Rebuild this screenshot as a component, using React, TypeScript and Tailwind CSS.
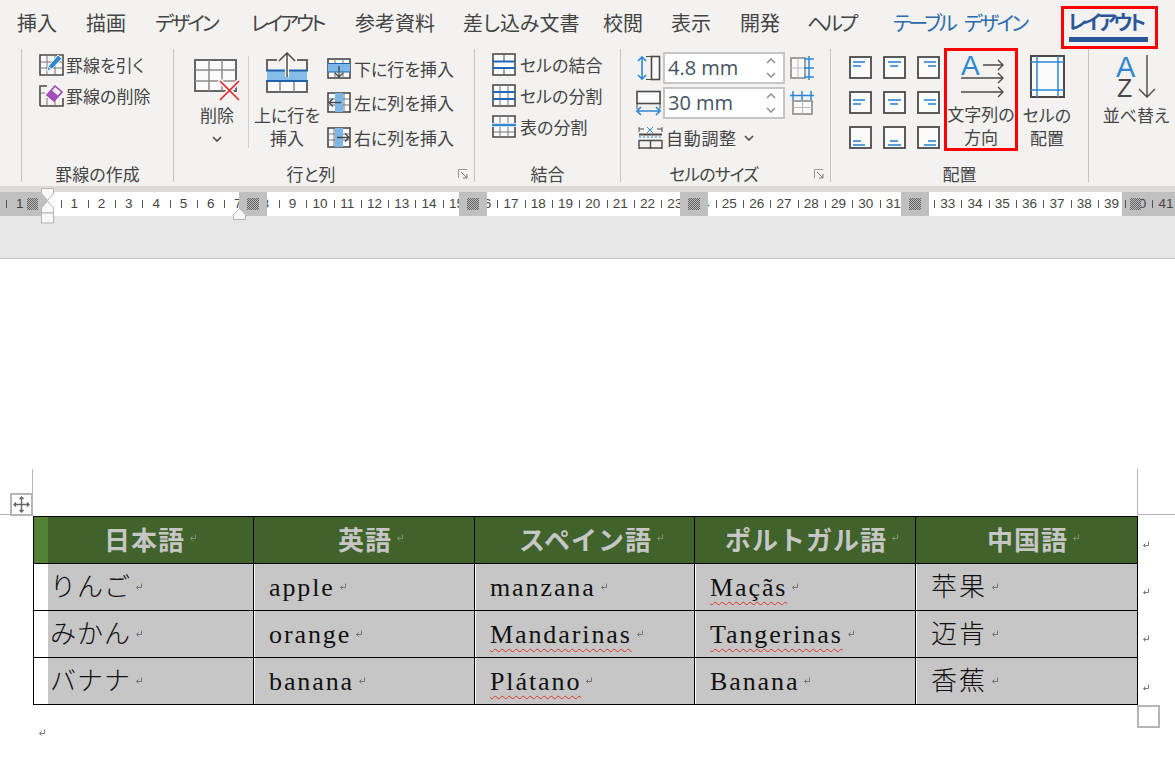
import type { ReactNode } from "react";

const TABS = [
  { label: "挿入", w: 69, cls: "" },
  { label: "描画", w: 69, cls: "" },
  { label: "デザイン", w: 96, cls: "tracking-[-2.9px]" },
  { label: "レイアウト", w: 104, cls: "tracking-[-3px]" },
  { label: "参考資料", w: 108, cls: "" },
  { label: "差し込み文書", w: 140, cls: "" },
  { label: "校閲", w: 68, cls: "" },
  { label: "表示", w: 69, cls: "" },
  { label: "開発", w: 68, cls: "" },
  { label: "ヘルプ", w: 86, cls: "-ml-[1px] tracking-[-3px]" },
];

const RULER = [1, null, ...Array.from({ length: 41 }, (_, i) => i + 1)];
const RULER_GAPS = [239, 459, 680, 901];

const HEAD = ["日本語", "英語", "スペイン語", "ポルトガル語", "中国語"];
const ROWS = [
  ["りんご", "apple", "manzana", "Maçãs", "苹果"],
  ["みかん", "orange", "Mandarinas", "Tangerinas", "迈肯"],
  ["バナナ", "banana", "Plátano", "Banana", "香蕉"],
];
const MISSPELT = ["Maçãs", "Mandarinas", "Tangerinas", "Plátano"];

const BLUE = "#2f86d1";
const DARK = "#4a4a4a";
const GRID = "#777";

function Mark({ color = "#777" }: { color?: string }) {
  return (
    <svg width="8" height="8" viewBox="0 0 8 8" className="shrink-0" fill="none" stroke={color}>
      <path d="M6.5 0.5v4H1.5M3.5 2.5l-2 2 2 2" />
    </svg>
  );
}

function DrawIcon() {
  return (
    <svg width="25" height="23" viewBox="0 0 25 23" fill="none">
      <path d="M1 2h23v20H1z" fill="#f8f8f8" stroke={DARK} strokeWidth="1.6" />
      <path d="M8 2v20M16 2v20M1 9h23M1 15h23" stroke={GRID} />
      <path d="M8 18l1.5-5L19 2l4 3.5L13 16z" fill={BLUE} stroke="#f3f2f1" />
      <path d="M10 14l3 2.5" stroke="#fff" />
    </svg>
  );
}

function EraseIcon() {
  return (
    <svg width="25" height="23" viewBox="0 0 25 23" fill="none">
      <path d="M1 22V2h7M24 14v8H1" stroke={DARK} strokeWidth="1.6" />
      <path d="M8 22v-8M16 22v-6M1 9h5" stroke={GRID} />
      <path d="M8 11l8-9 7 6-8 9z" fill="#f3f2f1" stroke="#9a3fae" strokeWidth="1.6" />
      <path d="M8 11l4.5-5 7 6-4.5 5z" fill="#a64fbb" />
    </svg>
  );
}

function DeleteIcon() {
  return (
    <svg width="46" height="42" viewBox="0 0 46 42" fill="none" className="mt-[10px]">
      <path d="M1 1h41v31H1z" fill="#fafafa" stroke="#666" strokeWidth="2" />
      <path d="M15 1v31M28 1v31M1 11h41M1 22h41" stroke="#8a8a8a" strokeWidth="1.5" />
      <path d="M25 21l21 21M46 21L25 42" stroke="#f3f2f1" strokeWidth="5" />
      <path d="M26 22l19 19M45 22L26 41" stroke="#e02020" strokeWidth="1.6" />
    </svg>
  );
}

function InsertAboveIcon() {
  return (
    <svg width="42" height="41" viewBox="0 0 42 41" fill="none" className="mt-[3px]">
      <path d="M1 18V8h10M31 8h10v10" stroke="#666" strokeWidth="2" />
      <path d="M1 29v11h40V29" fill="#fafafa" stroke="#666" strokeWidth="2" />
      <path d="M14 29v11M28 29v11" stroke="#888" strokeWidth="1.5" />
      <rect x="1" y="18" width="40" height="11" fill="#86bce8" />
      <path d="M0 18.5h42M0 29h42" stroke="#1f62ad" strokeWidth="2" />
      <path d="M21 2v23" stroke="#fff" strokeWidth="4" />
      <path d="M21 1v24M13 9l8-8 8 8" stroke={DARK} strokeWidth="1.5" />
    </svg>
  );
}

function InsertSmallIcon({ dir }: { dir: "down" | "left" | "right" }) {
  return (
    <svg width="24" height="21" viewBox="0 0 24 21" fill="none">
      <rect x="1" y="1" width="22" height="19" fill="#fafafa" stroke={DARK} strokeWidth="1.6" />
      {dir === "down" && (
        <>
          <path d="M8 1v19M16 1v19" stroke={GRID} />
          <rect x="1" y="6" width="22" height="8" fill="#7db7e8" />
          <path d="M1 5.5h22M1 14h22" stroke="#1f62ad" />
          <path d="M12 8v11M8 15l4 4 4-4" stroke={DARK} strokeWidth="1.3" />
        </>
      )}
      {dir === "left" && (
        <>
          <path d="M17 1v19M1 7h22M1 13h22" stroke={GRID} />
          <rect x="8" y="1" width="8" height="19" fill="#7db7e8" />
          <path d="M14 10.5H2M6 6.5l-4 4 4 4" stroke={DARK} strokeWidth="1.3" />
        </>
      )}
      {dir === "right" && (
        <>
          <path d="M7 1v19M1 7h22M1 13h22" stroke={GRID} />
          <rect x="8" y="1" width="8" height="19" fill="#7db7e8" />
          <path d="M10 10.5h12M18 6.5l4 4-4 4" stroke={DARK} strokeWidth="1.3" />
        </>
      )}
    </svg>
  );
}

function MergeIcon({ kind }: { kind: "merge" | "split" | "table" }) {
  return (
    <svg width="24" height="23" viewBox="0 0 24 23" fill="none">
      {kind !== "table" && <rect x="1" y="1" width="22" height="21" fill="#fafafa" stroke={DARK} strokeWidth="1.6" />}
      {kind === "merge" && (
        <>
          <path d="M12 1v7M12 15v7" stroke={DARK} />
          <path d="M1 8.5h22M1 15h22" stroke="#1f6ab8" strokeWidth="2" />
        </>
      )}
      {kind === "split" && (
        <>
          <path d="M8 1v21M16 1v21M1 15h22" stroke={GRID} />
          <path d="M1 8h22M1 15h22" stroke="#1f6ab8" strokeWidth="2" />
        </>
      )}
      {kind === "table" && (
        <>
          <path d="M1 8V1h22v7M1 12v10h22V12" fill="#fafafa" stroke={DARK} strokeWidth="1.6" />
          <path d="M8 1v7M16 1v7M8 12v10M16 12v10M1 17h22" stroke={GRID} />
          <path d="M0 10h24" stroke={BLUE} strokeWidth="2.4" />
        </>
      )}
    </svg>
  );
}

function RowHeightIcon() {
  return (
    <svg width="25" height="26" viewBox="0 0 25 26" fill="none">
      <path d="M6 2v22M2 6l4-4 4 4M2 20l4 4 4-4" stroke={BLUE} strokeWidth="1.6" />
      <rect x="15.5" y="1.5" width="8" height="23" fill="#fafafa" stroke={DARK} strokeWidth="1.6" />
      <path d="M10 1.5h5M10 24.5h5" stroke={DARK} />
    </svg>
  );
}

function ColWidthIcon() {
  return (
    <svg width="25" height="26" viewBox="0 0 25 26" fill="none">
      <rect x="1" y="1.5" width="23" height="12" fill="#fafafa" stroke={DARK} strokeWidth="1.6" />
      <path d="M1 13v6M24 13v6" stroke={DARK} />
      <path d="M1 21h23M5 17l-4 4 4 4M20 17l4 4-4 4" stroke={BLUE} strokeWidth="1.6" />
    </svg>
  );
}

function DistributeIcon({ cols }: { cols?: boolean }) {
  return (
    <svg width="24" height="24" viewBox="0 0 24 24" fill="none">
      {cols ? (
        <>
          <rect x="3" y="10" width="19" height="13" fill="#fafafa" stroke="#8a8a8a" strokeWidth="1.6" />
          <path d="M12.5 10v13M3 16.5h19" stroke="#bbb" />
          <path d="M0 4.5h24M3 0v9M12 0v9M21 0v9" stroke={BLUE} strokeWidth="1.5" />
        </>
      ) : (
        <>
          <rect x="1" y="2" width="14" height="20" fill="#fafafa" stroke="#8a8a8a" strokeWidth="1.6" />
          <path d="M1 12h14M8 2v20" stroke="#bbb" />
          <path d="M19 0v24M14 3h10M14 12h10M14 21h10" stroke={BLUE} strokeWidth="1.5" />
        </>
      )}
    </svg>
  );
}

function AutoFitIcon() {
  return (
    <svg width="25" height="23" viewBox="0 0 25 23" fill="none">
      <path d="M1 6V1M24 6V1M1 3h5M19 3h5" stroke={DARK} />
      <path d="M9 1l3 3 3-3M9 7l3-3 3 3" stroke={BLUE} />
      <path d="M1 8.5h23" stroke={DARK} strokeWidth="2" />
      <path d="M1 11h23" stroke={BLUE} strokeDasharray="2 2" />
      <path d="M1 14.5h23M1 22h23M1 14v9M24 14v9M12.5 14v9" stroke={DARK} strokeWidth="1.4" />
    </svg>
  );
}

function AlignIcon({ row, col }: { row: number; col: number }) {
  const longY = [6, 9, 15][row];
  const shortY = [10, 13, 19][row];
  const long = [[4, 16], [5, 18], [7, 19]][col];
  const short = [[4, 12], [7, 15], [11, 19]][col];
  const first = row === 2 ? short : long;
  const second = row === 2 ? long : short;
  return (
    <svg width="23" height="23" viewBox="0 0 23 23" fill="none">
      <rect x="1" y="1" width="21" height="21" fill="#fafafa" stroke={DARK} strokeWidth="1.8" />
      <path d={`M${first[0]} ${longY}H${first[1]}`} stroke={BLUE} strokeWidth="1.6" />
      <path d={`M${second[0]} ${shortY}H${second[1]}`} stroke={BLUE} strokeWidth="1.6" />
    </svg>
  );
}

function TextDirIcon() {
  return (
    <svg width="44" height="45" viewBox="0 0 44 45" fill="none" className="mt-[2px] overflow-visible">
      <text x="2" y="22" fontSize="28" fontFamily="Liberation Sans" fill={BLUE}>
        A
      </text>
      <path d="M24 12h20M2 25h42M2 39h42" stroke={DARK} strokeWidth="1.4" />
      <path d="M39 7l5 5-5 5M39 20l5 5-5 5M39 34l5 5-5 5" stroke={DARK} strokeWidth="1.4" />
    </svg>
  );
}

function CellMarginIcon() {
  return (
    <svg width="35" height="43" viewBox="0 0 35 43" fill="none" className="mt-[6px]">
      <rect x="1" y="1" width="33" height="41" fill="#fafafa" stroke={DARK} strokeWidth="2" />
      <path d="M7 1v41M28 1v41M1 7h33M1 35h33" stroke={BLUE} strokeWidth="1.5" />
    </svg>
  );
}

function SortIcon() {
  return (
    <svg width="40" height="44" viewBox="0 0 40 44" fill="none" className="mt-[6px] overflow-visible">
      <text x="0" y="22" fontSize="29" fontFamily="Liberation Sans" fill={BLUE}>
        A
      </text>
      <text x="1" y="42" fontSize="25" fontFamily="Liberation Sans" fill={DARK}>
        Z
      </text>
      <path d="M31 0v42M23 34l8 8 8-8" stroke={DARK} strokeWidth="1.4" />
    </svg>
  );
}

function Chevron({ className = "" }: { className?: string }) {
  return (
    <svg width="10" height="6" viewBox="0 0 10 6" fill="none" stroke={DARK} strokeWidth="1.6" className={className}>
      <path d="M1 1l4 4 4-4" />
    </svg>
  );
}

function SmallBtn({ icon, label, gap = "gap-[3px]", h }: { icon: ReactNode; label: string; gap?: string; h: string }) {
  return (
    <div className={`flex items-center ${gap} ${h}`}>
      {icon}
      <span className="whitespace-nowrap text-[17px] leading-none">{label}</span>
    </div>
  );
}

function BigBtn({ icon, lines, iconH = "h-[52px]", className = "" }: { icon: ReactNode; lines: ReactNode[]; iconH?: string; className?: string }) {
  return (
    <div className={`flex shrink-0 flex-col items-center ${className}`}>
      <div className={`flex items-start justify-center ${iconH}`}>{icon}</div>
      <div className="mt-[2px] flex flex-col items-center text-[17px] leading-[23px] whitespace-nowrap">
        {lines.map((l, i) => (
          <span key={i} className="flex h-[23px] items-center">
            {l}
          </span>
        ))}
      </div>
    </div>
  );
}

function Group({ w, label, labelCls = "", launcher, children }: { w: string; label?: string; labelCls?: string; launcher?: boolean; children?: ReactNode }) {
  return (
    <div className={`relative flex h-full shrink-0 flex-col border-r border-[#c8c6c4] ${w}`}>
      <div className="flex min-h-0 flex-1">{children}</div>
      <div className={`h-[20px] text-center text-[17px] leading-[23px] ${labelCls}`}>{label}</div>
      {launcher && (
        <svg width="10" height="10" viewBox="0 0 10 10" fill="none" className="absolute right-[6px] bottom-[3px]">
          <path d="M0.5 9V0.5H9" stroke="#999" />
          <path d="M3 3l5.5 5.5M5 9h4V5" stroke="#777" />
        </svg>
      )}
    </div>
  );
}

function Spinner({ value }: { value: string }) {
  return (
    <div className="flex h-[32px] w-[122px] items-center justify-between border-2 border-[#c6c6c6] bg-white pr-[7px] pl-[3px]">
      <span className="text-[20px] leading-none text-[#44525f] [font-family:'Open_Sans',sans-serif]">{value}</span>
      <div className="flex flex-col gap-[8px]">
        <Chevron className="rotate-180 opacity-60" />
        <Chevron className="opacity-60" />
      </div>
    </div>
  );
}

function Ruler() {
  return (
    <div className="relative h-[24px] overflow-hidden bg-white text-[13.5px] text-[#444] [font-family:'Liberation_Sans',sans-serif]">
      <div className="absolute top-0 left-0 h-full w-[47px] bg-[#c0c0c0]" />
      <div className="absolute top-0 left-[1122px] h-full w-[53px] bg-[#c0c0c0]" />
      <div className="relative flex h-full pl-[6px]">
        {RULER.map((n, i) => (
          <div key={i} className="relative flex h-full w-[27.3px] shrink-0 items-center justify-center">
            {n !== null && <span className="absolute top-[8px] left-0 h-[8px] w-px bg-[#555]" />}
            {n}
          </div>
        ))}
      </div>
      {RULER_GAPS.map((x) => (
        <div key={x} className="absolute top-0 flex h-full w-[28px] items-center justify-center bg-[#c0c0c0]" style={{ left: x }}>
          <div className="h-[12px] w-[12px] bg-[repeating-conic-gradient(#666_0_25%,#b8b8b8_0_50%)] bg-[length:2px_2px]" />
        </div>
      ))}
      <div className="absolute top-[6px] left-[27px] h-[12px] w-[11px] bg-[repeating-conic-gradient(#666_0_25%,#b8b8b8_0_50%)] bg-[length:2px_2px]" />
      <div className="absolute top-[6px] left-[1130px] h-[12px] w-[11px] bg-[repeating-conic-gradient(#666_0_25%,#b8b8b8_0_50%)] bg-[length:2px_2px]" />
    </div>
  );
}

function Cell({ text, first }: { text: string; first: boolean }) {
  const wavy = MISSPELT.includes(text);
  return (
    <div className={`h-[47px] border-r border-b border-black bg-white ${first ? "pl-[14px]" : "pl-px"}`}>
      <div className={`flex h-full items-center gap-[4px] bg-[#c6c6c6] text-[26px] font-light text-[#111] [font-family:'Liberation_Serif','Noto_Sans_CJK_JP',serif] [font-feature-settings:normal] ${first ? "pl-[2px] tracking-[1px]" : "pl-[14px] tracking-[1.9px]"}`}>
        <span className={wavy ? "underline decoration-[#d9352c] decoration-wavy decoration-1 underline-offset-[5px] [text-decoration-skip-ink:none]" : ""}>{text}</span>
        <Mark />
      </div>
    </div>
  );
}

export default function App() {
  return (
    <div className="relative h-[774px] w-[1175px] overflow-hidden bg-white text-[#444] [font-family:'Noto_Sans_CJK_JP',sans-serif] [font-feature-settings:'palt']">
      {/* ribbon */}
      <div className="h-[186px] bg-[#f3f2f1]">
        <div className="relative z-10 flex h-[46px] pl-[17px] text-[20px] leading-[46px]">
          {TABS.map((t) => (
            <div key={t.label} className={`shrink-0 whitespace-nowrap ${t.cls}`} style={{ width: t.w }}>
              {t.label}
            </div>
          ))}
          <div className="w-[168px] shrink-0 tracking-[-2.7px] whitespace-pre text-[#2b6aa8] [word-spacing:7px]">テーブル デザイン</div>
          <div className="mt-[6px] box-border flex h-[43px] w-[97px] shrink-0 flex-col border-[3px] border-[#f00] pl-[4px] font-bold text-[#2b579a]">
            <span className="h-[26px] text-[20px] leading-[25px] tracking-[-3.2px] whitespace-nowrap">レイアウト</span>
            <span className="mt-[2px] ml-[1px] h-[5px] w-[79px] bg-[#2b579a]" />
          </div>
        </div>
        <div className="mt-[3px] flex h-[133px]">
          <Group w="w-[22px]" />
          <Group w="w-[152px]" label="罫線の作成">
            <div className="pl-[17px]">
              <SmallBtn h="h-[31px]" icon={<DrawIcon />} label="罫線を引く" gap="gap-[2px]" />
              <SmallBtn h="h-[31px]" icon={<EraseIcon />} label="罫線の削除" gap="gap-[2px]" />
            </div>
          </Group>
          <Group w="w-[301px]" label="行と列" labelCls="pr-[26px]" launcher>
            <div className="mt-[7px] mb-[1px] h-[92px] w-[75px] shrink-0 border-r border-[#d2d0ce] pl-[12px]">
              <BigBtn className="-mt-[7px]" icon={<DeleteIcon />} lines={["削除", <Chevron key="c" className="mt-[2px]" />]} />
            </div>
            <BigBtn className="w-[76px]" icon={<InsertAboveIcon />} lines={["上に行を", "挿入"]} />
            <div className="pt-[2px] pl-[2px]">
              <SmallBtn h="h-[34.5px]" icon={<InsertSmallIcon dir="down" />} label="下に行を挿入" gap="gap-[3px]" />
              <SmallBtn h="h-[34.5px]" icon={<InsertSmallIcon dir="left" />} label="左に列を挿入" gap="gap-[3px]" />
              <SmallBtn h="h-[34.5px]" icon={<InsertSmallIcon dir="right" />} label="右に列を挿入" gap="gap-[3px]" />
            </div>
          </Group>
          <Group w="w-[146px]" label="結合">
            <div className="pl-[17px]">
              <SmallBtn h="h-[31px]" icon={<MergeIcon kind="merge" />} label="セルの結合" gap="gap-[4px]" />
              <SmallBtn h="h-[31px]" icon={<MergeIcon kind="split" />} label="セルの分割" gap="gap-[4px]" />
              <SmallBtn h="h-[31px]" icon={<MergeIcon kind="table" />} label="表の分割" gap="gap-[4px]" />
            </div>
          </Group>
          <Group w="w-[210px]" label="セルのサイズ" labelCls="pr-[24px] tracking-[-1px]" launcher>
            <div className="flex flex-col gap-[3px] pt-[3px] pl-[15px]">
              <div className="flex items-center gap-[2px]">
                <RowHeightIcon />
                <Spinner value="4.8 mm" />
                <div className="ml-[3px]">
                  <DistributeIcon />
                </div>
              </div>
              <div className="flex items-center gap-[2px]">
                <ColWidthIcon />
                <Spinner value="30 mm" />
                <div className="ml-[3px]">
                  <DistributeIcon cols />
                </div>
              </div>
              <div className="mt-[4px] flex items-center pl-[2px]">
                <AutoFitIcon />
                <span className="ml-[3px] text-[17px] leading-none tracking-[0.7px]">自動調整</span>
                <Chevron className="ml-[7px]" />
              </div>
            </div>
          </Group>
          <Group w="w-[258px]" label="配置">
            <div className="grid h-[92px] shrink-0 grid-cols-[23px_23px_23px] gap-x-[11px] gap-y-[12px] pt-[7px] pl-[18px]">
              {[0, 1, 2].map((row) =>
                [0, 1, 2].map((col) => <AlignIcon key={`${row}${col}`} row={row} col={col} />),
              )}
            </div>
            <BigBtn
              className="-mt-[1px] ml-[4px] box-border h-[103px] w-[74px] border-[3px] border-[#f00]"
              iconH="h-[51px]"
              icon={<TextDirIcon />}
              lines={["文字列の", "方向"]}
            />
            <BigBtn className="w-[58px]" icon={<CellMarginIcon />} lines={["セルの", "配置"]} />
          </Group>
          <div className="ml-[4px] w-[86px] shrink-0">
            <BigBtn icon={<SortIcon />} lines={["並べ替え"]} />
          </div>
        </div>
      </div>

      {/* rulers */}
      <div className="h-[6px] bg-[#dcdbda]" />
      <div className="relative">
        <Ruler />
        <svg width="14" height="36" viewBox="0 0 14 36" fill="#f8f8f8" stroke="#b5b5b5" className="absolute -top-[4px] left-[41px]">
          <path d="M0.5 0.5h12v5l-6 7-6-7z" />
          <path d="M6.5 13l6 7v5h-12v-5z" />
          <path d="M0.5 25h12v10h-12z" />
        </svg>
        <svg width="14" height="12" viewBox="0 0 14 12" fill="#f8f8f8" stroke="#b5b5b5" className="absolute top-[16px] left-[233px]">
          <path d="M6.5 0.5l6 6v5h-12v-5z" />
        </svg>
      </div>
      <div className="h-[43px] border-b border-[#c6c6c6] bg-[#e6e6e6]" />

      {/* document */}
      <div className="pt-[257px] pl-[33px]">
        <div className="relative w-[1105px]">
          <span className="absolute -top-[47px] -left-px h-[46px] w-px bg-[#b5b5b5]" />
          <span className="absolute -top-[2px] -left-[33px] h-px w-[33px] bg-[#b5b5b5]" />
          <div className="absolute -top-[23px] -left-[23px] flex h-[23px] w-[23px] items-center justify-center border-2 border-[#b5b5b5] bg-white">
            <svg width="17" height="17" viewBox="0 0 17 17" fill="none" stroke="#666" strokeWidth="1.4">
              <path d="M8.5 1v15M1 8.5h15M6.5 3l2-2 2 2M6.5 14l2 2 2-2M3 6.5l-2 2 2 2M14 6.5l2 2-2 2" />
            </svg>
          </div>
          <span className="absolute -top-[47px] right-0 h-[45px] w-px bg-[#b5b5b5]" />
          <span className="absolute -top-[2px] left-[1104px] h-px w-[40px] bg-[#b5b5b5]" />

          <div className="grid grid-cols-[220px_221px_220px_221px_222px] border-t border-l border-black">
            {HEAD.map((h, i) => (
              <div key={h} className="relative flex h-[47px] items-center justify-center border-r border-b border-black bg-[#40622b] pb-[3px] pl-[2px] text-[26px] font-bold tracking-[1px] text-[#c6c6c6] [font-feature-settings:normal]">
                {i === 0 && <span className="absolute top-0 left-0 h-full w-[14px] bg-[#548235]" />}
                <span className="relative">
                  {h}
                  <span className="absolute top-[15px] -right-[12px]">
                    <Mark color="#7f9270" />
                  </span>
                </span>
              </div>
            ))}
            {ROWS.map((row) =>
              row.map((c, i) => <Cell key={c} text={c} first={i === 0} />),
            )}
          </div>

          {[25, 72, 119, 168].map((y) => (
            <span key={y} className="absolute left-[1109px]" style={{ top: y }}>
              <Mark />
            </span>
          ))}
          <div className="absolute top-[189px] left-[1104px] h-[23px] w-[23px] border-2 border-[#b5b5b5] bg-white" />
        </div>
        <div className="mt-[24px] ml-[5px]">
          <Mark />
        </div>
      </div>
    </div>
  );
}
